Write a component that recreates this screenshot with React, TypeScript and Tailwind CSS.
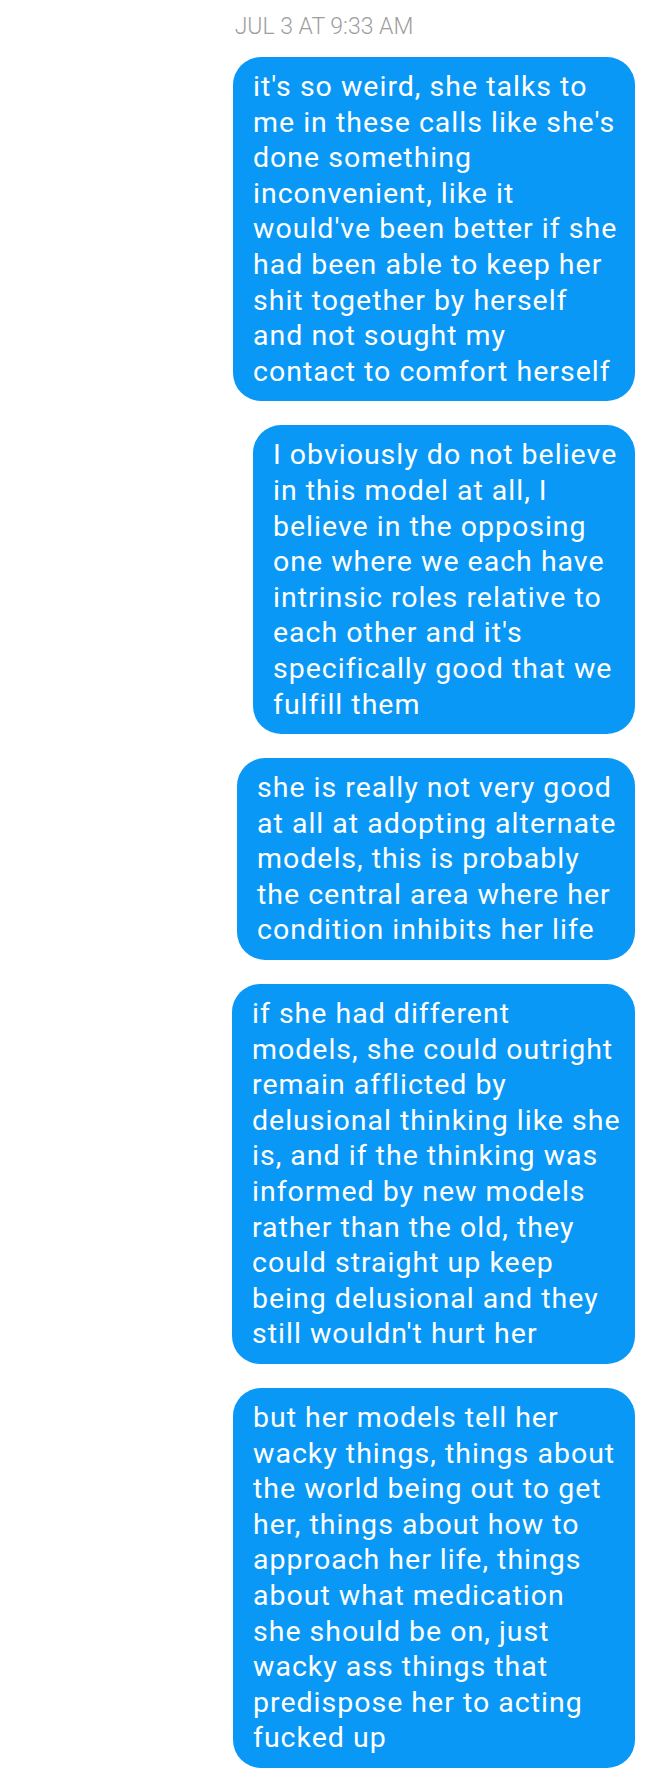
import React from "react";

const bubbles: { w: string; lines: string[] }[] = [
  {
    w: "w-[402px]",
    lines: [
      "it's so weird, she talks to",
      "me in these calls like she's",
      "done something",
      "inconvenient, like it",
      "would've been better if she",
      "had been able to keep her",
      "shit together by herself",
      "and not sought my",
      "contact to comfort herself",
    ],
  },
  {
    w: "w-[382px]",
    lines: [
      "I obviously do not believe",
      "in this model at all, I",
      "believe in the opposing",
      "one where we each have",
      "intrinsic roles relative to",
      "each other and it's",
      "specifically good that we",
      "fulfill them",
    ],
  },
  {
    w: "w-[398px]",
    lines: [
      "she is really not very good",
      "at all at adopting alternate",
      "models, this is probably",
      "the central area where her",
      "condition inhibits her life",
    ],
  },
  {
    w: "w-[403px]",
    lines: [
      "if she had different",
      "models, she could outright",
      "remain afflicted by",
      "delusional thinking like she",
      "is, and if the thinking was",
      "informed by new models",
      "rather than the old, they",
      "could straight up keep",
      "being delusional and they",
      "still wouldn't hurt her",
    ],
  },
  {
    w: "w-[402px]",
    lines: [
      "but her models tell her",
      "wacky things, things about",
      "the world being out to get",
      "her, things about how to",
      "approach her life, things",
      "about what medication",
      "she should be on, just",
      "wacky ass things that",
      "predispose her to acting",
      "fucked up",
    ],
  },
];

export default function App() {
  return (
    <div
      className="w-[648px] min-h-[1787px] bg-white pt-[13px] pb-[19px]"
      style={{ fontFamily: "Roboto, 'Noto Sans', sans-serif" }}
    >
      <div className="text-center text-[23px] leading-[28px] font-light text-[#9e9e9e]">
        JUL 3 AT 9:33 AM
      </div>
      <div className="mt-4 flex flex-col items-end gap-6 pr-[13px]">
        {bubbles.map((b, i) => (
          <div
            key={i}
            className={`${b.w} rounded-[28px] bg-[#0a98f7] pl-5 pr-2 py-3 text-[28.5px] tracking-[1px] leading-[35.6px] text-white`}
          >
            {b.lines.map((l, j) => (
              <div key={j} className="whitespace-nowrap">
                {l}
              </div>
            ))}
          </div>
        ))}
      </div>
    </div>
  );
}
